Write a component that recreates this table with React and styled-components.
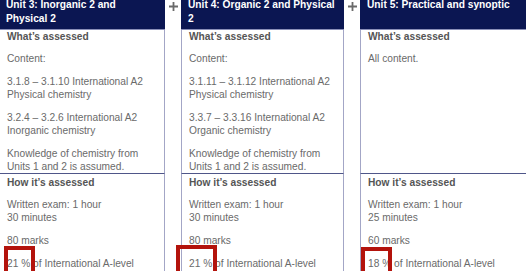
import React from "react";
import styled, { createGlobalStyle } from "styled-components";

const units = [
  {
    title: "Unit 3: Inorganic 2 and Physical 2",
    assessed: [
      "Content:",
      "3.1.8 – 3.1.10 International A2 Physical chemistry",
      "3.2.4 – 3.2.6 International A2 Inorganic chemistry",
      "Knowledge of chemistry from Units 1 and 2 is assumed.",
    ],
    exam: ["Written exam: 1 hour", "30 minutes"],
    marks: "80 marks",
    pct: "21 %",
    box: { l: -3, r: -5, t: -12 },
  },
  {
    title: "Unit 4: Organic 2 and Physical 2",
    assessed: [
      "Content:",
      "3.1.11 – 3.1.12 International A2 Physical chemistry",
      "3.3.7 – 3.3.16 International A2 Organic chemistry",
      "Knowledge of chemistry from Units 1 and 2 is assumed.",
    ],
    exam: ["Written exam: 1 hour", "30 minutes"],
    marks: "80 marks",
    pct: "21 %",
    box: { l: -13, r: -5, t: -13 },
  },
  {
    title: "Unit 5: Practical and synoptic",
    assessed: ["All content."],
    exam: ["Written exam: 1 hour", "25 minutes"],
    marks: "60 marks",
    pct: "18 %",
    box: { l: -7, r: -1, t: -11 },
  },
];

export default function App() {
  return (
    <>
      <GlobalStyle />
      <Table>
        {units.map((u, i) => (
          <React.Fragment key={u.title}>
            {i > 0 && (
              <PlusCell $col={i * 2}>
                <svg width="9" height="9" viewBox="0 0 9 9">
                  <path d="M0 4.5h9M4.5 0v9" stroke="#6a6a6a" strokeWidth="1.8" />
                </svg>
              </PlusCell>
            )}
            <Header $col={i * 2 + 1}>{u.title}</Header>
          </React.Fragment>
        ))}

        {units.map((u, i) => (
          <Cell key={"a" + i} $col={i * 2 + 1} $divider>
            <Heading>What’s assessed</Heading>
            {u.assessed.map((t) => (
              <Para key={t}>{t}</Para>
            ))}
          </Cell>
        ))}

        {units.map((u, i) => (
          <Cell key={"h" + i} $col={i * 2 + 1}>
            <Heading>How it’s assessed</Heading>
            <Para>
              {u.exam[0]}
              <br />
              {u.exam[1]}
            </Para>
            <Para>{u.marks}</Para>
            <Para>
              <Marked>
                {u.pct}
                <RedBox $l={u.box.l} $r={u.box.r} $t={u.box.t} />
              </Marked>{" "}
              of International A-level
            </Para>
          </Cell>
        ))}
      </Table>
    </>
  );
}

const GlobalStyle = createGlobalStyle`
  html, body {
    margin: 0;
    background: #fff;
    overflow: hidden;
  }
  body {
    font-family: "Liberation Sans", Arial, sans-serif;
    font-size: 10.2px;
  }
`;

const Table = styled.div`
  display: grid;
  grid-template-columns: 166px 16px 163px 16px 1fr;
  width: 580px;
  margin: -6px 0 0 -1px;
`;

const Header = styled.div`
  grid-column: ${(p) => p.$col};
  background: #0b1652;
  color: #fff;
  font-weight: bold;
  line-height: 14px;
  padding: 4px 7px 3px 7px;
  border-bottom: 1px solid #8a8fb8;
`;

const PlusCell = styled.div`
  grid-column: ${(p) => p.$col};
  display: flex;
  justify-content: center;
  padding-top: 8px;
  svg {
    display: block;
  }
`;

const Cell = styled.div`
  grid-column: ${(p) => p.$col};
  display: flex;
  flex-direction: column;
  gap: 10px;
  padding: ${(p) => (p.$divider ? "0 6px 0 7px" : "1.5px 6px 20px 7px")};
  border-left: 1px solid #a3a6c6;
  border-right: 1px solid #a3a6c6;
  border-bottom: ${(p) => (p.$divider ? "1px solid #4f5689" : "none")};
  color: #6a6a6a;
`;

const Heading = styled.div`
  font-weight: bold;
  color: #555;
  line-height: 13px;
  margin-bottom: -1px;
`;

const Para = styled.p`
  margin: 0;
  line-height: 13px;
`;

const Marked = styled.span`
  position: relative;
`;

const RedBox = styled.span`
  position: absolute;
  left: ${(p) => p.$l}px;
  right: ${(p) => p.$r}px;
  top: ${(p) => p.$t}px;
  bottom: -24px;
  border: 4px solid #b3130c;
`;
